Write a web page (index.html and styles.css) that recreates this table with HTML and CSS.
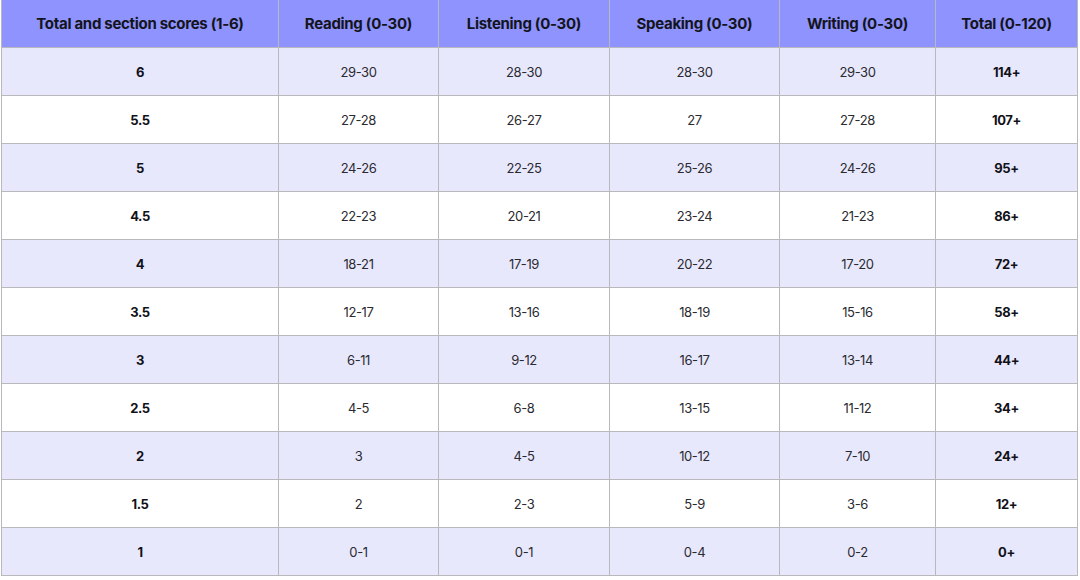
FILE: index.html
```html
<!DOCTYPE html>
<html>
<head>
<meta charset="utf-8">
<link rel="stylesheet" href="styles.css">
</head>
<body>
<table class="scores">
  <colgroup>
    <col class="c1"><col class="c2"><col class="c3"><col class="c4"><col class="c5"><col class="c6">
  </colgroup>
  <thead>
    <tr>
      <th>Total and section scores (1-6)</th>
      <th>Reading (0-30)</th>
      <th>Listening (0-30)</th>
      <th>Speaking (0-30)</th>
      <th>Writing (0-30)</th>
      <th>Total (0-120)</th>
    </tr>
  </thead>
  <tbody>
    <tr class="alt"><td class="b">6</td><td>29-30</td><td>28-30</td><td>28-30</td><td>29-30</td><td class="b">114+</td></tr>
    <tr><td class="b">5.5</td><td>27-28</td><td>26-27</td><td>27</td><td>27-28</td><td class="b">107+</td></tr>
    <tr class="alt"><td class="b">5</td><td>24-26</td><td>22-25</td><td>25-26</td><td>24-26</td><td class="b">95+</td></tr>
    <tr><td class="b">4.5</td><td>22-23</td><td>20-21</td><td>23-24</td><td>21-23</td><td class="b">86+</td></tr>
    <tr class="alt"><td class="b">4</td><td>18-21</td><td>17-19</td><td>20-22</td><td>17-20</td><td class="b">72+</td></tr>
    <tr><td class="b">3.5</td><td>12-17</td><td>13-16</td><td>18-19</td><td>15-16</td><td class="b">58+</td></tr>
    <tr class="alt"><td class="b">3</td><td>6-11</td><td>9-12</td><td>16-17</td><td>13-14</td><td class="b">44+</td></tr>
    <tr><td class="b">2.5</td><td>4-5</td><td>6-8</td><td>13-15</td><td>11-12</td><td class="b">34+</td></tr>
    <tr class="alt"><td class="b">2</td><td>3</td><td>4-5</td><td>10-12</td><td>7-10</td><td class="b">24+</td></tr>
    <tr><td class="b">1.5</td><td>2</td><td>2-3</td><td>5-9</td><td>3-6</td><td class="b">12+</td></tr>
    <tr class="alt"><td class="b">1</td><td>0-1</td><td>0-1</td><td>0-4</td><td>0-2</td><td class="b">0+</td></tr>
  </tbody>
</table>
</body>
</html>
```

FILE: styles.css
```css
html, body {
  margin: 0;
  padding: 0;
  background: #ffffff;
}

body {
  font-family: Inter, "Liberation Sans", sans-serif;
  color: #1c1c24;
}

.scores {
  margin-left: 1px;
  width: 1076px;
  border-collapse: collapse;
  table-layout: fixed;
}

.c1 { width: 277px; }
.c2 { width: 160px; }
.c3 { width: 171px; }
.c4 { width: 170px; }
.c5 { width: 156px; }
.c6 { width: 142px; }

.scores th,
.scores td {
  border: 1px solid #b9b9bd;
  text-align: center;
  vertical-align: middle;
  padding: 0;
  height: 47px;
}

.scores th {
  background: #8e93fd;
  border-top: none;
  font-size: 15px;
  font-weight: 700;
  letter-spacing: -0.3px;
  color: #14141c;
}

.scores td {
  font-size: 13px;
  font-weight: 400;
  letter-spacing: -0.4px;
  color: #2a2a30;
}

.scores tr.alt td {
  background: #e8e8fd;
}

.scores td.b {
  font-weight: 700;
  color: #111118;
}
```
